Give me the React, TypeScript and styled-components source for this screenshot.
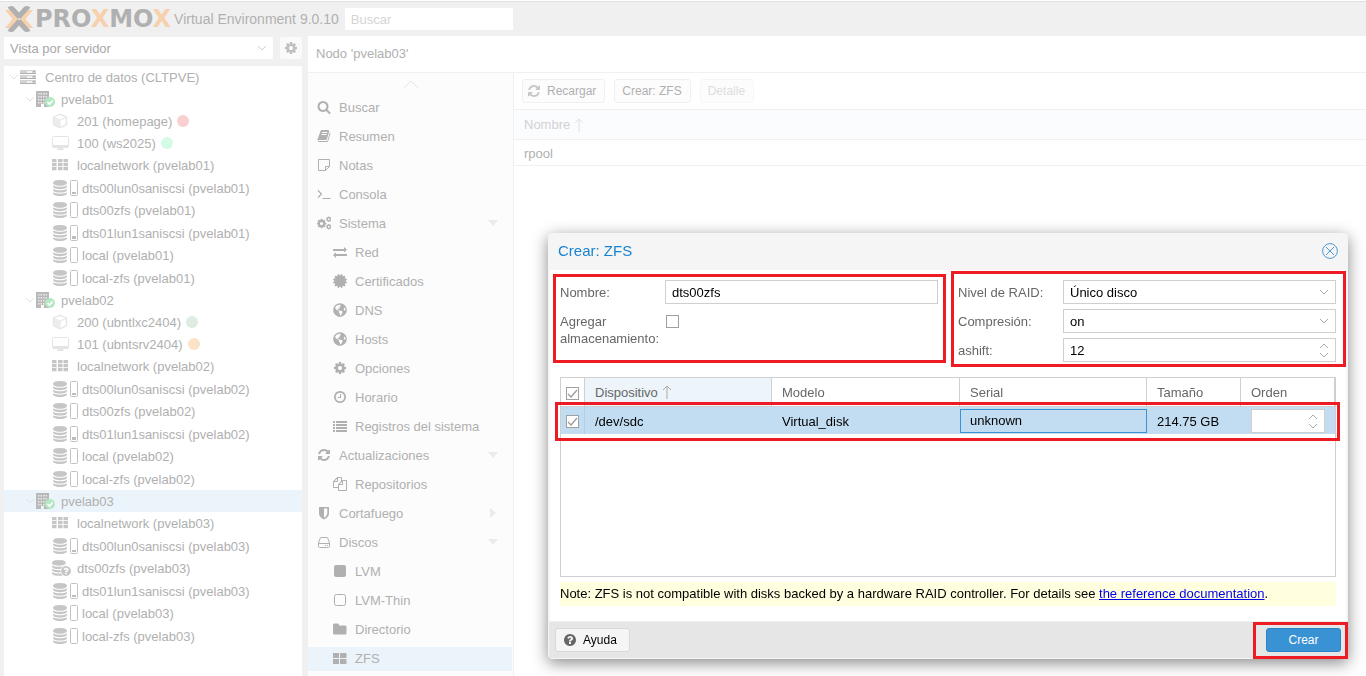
import React from "react";
import styled, { createGlobalStyle, css } from "styled-components";
import { FaCertificate, FaGlobeAmericas } from "react-icons/fa";

const GlobalStyle = createGlobalStyle`
  *, *::before, *::after { box-sizing: border-box; }
  html, body { margin: 0; padding: 0; }
  body, button, input, select {
    font-family: "Liberation Sans", Arial, Helvetica, sans-serif;
    font-size: 13px;
  }
  body { background: #fff; overflow: hidden; }
  ul { list-style: none; margin: 0; padding: 0; }
`;

/* ---------- icons ---------- */

const glyphs: Record<string, string> = {
  search:
    "M1216 832q0-185-131.5-316.5t-316.5-131.5-316.5 131.5-131.5 316.5 131.5 316.5 316.5 131.5 316.5-131.5 131.5-316.5zm512 832q0 52-38 90t-90 38q-54 0-90-38l-343-342q-179 124-399 124-143 0-273.5-55.5t-225-150-150-225-55.5-273.5 55.5-273.5 150-225 225-150 273.5-55.5 273.5 55.5 225 150 150 225 55.5 273.5q0 220-124 399l343 343q37 37 37 90z",
  refresh:
    "M1639 1056q0 5-1 7-64 268-268 434.5t-478 166.5q-146 0-282.5-55t-243.5-157l-129 129q-19 19-45 19t-45-19-19-45v-448q0-26 19-45t45-19h448q26 0 45 19t19 45-19 45l-137 137q71 66 161 102t187 36q134 0 250-65t186-179q11-17 53-117 8-23 30-23h192q13 0 22.5 9.5t9.5 22.5zm25-800v448q0 26-19 45t-45 19h-448q-26 0-45-19t-19-45 19-45l138-138q-148-137-349-137-134 0-250 65t-186 179q-11 17-53 117-8 23-30 23h-199q-13 0-22.5-9.5t-9.5-22.5v-7q65-268 270-434.5t480-166.5q146 0 284 55.5t245 156.5l130-129q19-19 45-19t45 19 19 45z",
  cog: "M1152 896q0-106-75-181t-181-75-181 75-75 181 75 181 181 75 181-75 75-181zm512-109v222q0 12-8 23t-20 13l-185 28q-19 54-39 91 35 50 107 138 10 12 10 25t-9 23q-27 37-99 108t-94 71q-12 0-26-9l-138-108q-44 23-91 38-16 136-29 186-7 28-36 28h-222q-14 0-24.5-8.5t-11.5-21.5l-28-184q-49-16-90-37l-141 107q-10 9-25 9-14 0-25-11-126-114-165-168-7-10-7-23 0-12 8-23 15-21 51-66.5t54-70.5q-27-50-41-99l-183-27q-13-2-21-12.5t-8-23.5v-222q0-12 8-23t19-13l186-28q14-46 39-92-40-57-107-138-10-12-10-24 0-10 9-23 26-36 98.5-107.5t94.5-71.5q13 0 26 10l138 107q44-23 91-38 16-136 29-186 7-28 36-28h222q14 0 24.5 8.5t11.5 21.5l28 184q49 16 90 37l142-107q9-9 24-9 13 0 25 10 129 119 165 170 7 8 7 22 0 12-8 23-15 21-51 66.5t-54 70.5q26 50 41 98l183 28q13 2 21 12.5t8 23.5z",
  clock:
    "M1024 544v448q0 14-9 23t-23 9h-320q-14 0-23-9t-9-23v-64q0-14 9-23t23-9h224v-352q0-14 9-23t23-9h64q14 0 23 9t9 23zm416 352q0-148-73-273t-198-198-273-73-273 73-198 198-73 273 73 273 198 198 273 73 273-73 198-198 73-273zm224 0q0 209-103 385.5t-279.5 279.5-385.5 103-385.5-103-279.5-279.5-103-385.5 103-385.5 279.5-279.5 385.5-103 385.5 103 279.5 279.5 103 385.5z",
  database:
    "M896 768q237 0 443-43t325-127v170q0 69-103 128t-280 93.5-385 34.5-385-34.5-280-93.5-103-128v-170q119 84 325 127t443 43zm0 768q237 0 443-43t325-127v170q0 69-103 128t-280 93.5-385 34.5-385-34.5-280-93.5-103-128v-170q119 84 325 127t443 43zm0-384q237 0 443-43t325-127v170q0 69-103 128t-280 93.5-385 34.5-385-34.5-280-93.5-103-128v-170q119 84 325 127t443 43zm0-1152q208 0 385 34.5t280 93.5 103 128v128q0 69-103 128t-280 93.5-385 34.5-385-34.5-280-93.5-103-128v-128q0-69 103-128t280-93.5 385-34.5z",
  question:
    "M1024 1376v-192q0-14-9-23t-23-9h-192q-14 0-23 9t-9 23v192q0 14 9 23t23 9h192q14 0 23-9t9-23zm256-672q0-88-55.5-163t-138.5-116-170-41q-243 0-371 213-15 24 8 42l132 100q7 6 19 6 16 0 25-12 53-68 86-92 34-24 86-24 48 0 85.5 26t37.5 59q0 38-20 61t-68 45q-63 28-115.5 86.5t-52.5 125.5v36q0 14 9 23t23 9h192q14 0 23-9t9-23q0-19 21.5-49.5t54.5-49.5q32-18 49-28.5t46-35 44.5-48 28-60.5 12.5-81zm384 192q0 209-103 385.5t-279.5 279.5-385.5 103-385.5-103-279.5-279.5-103-385.5 103-385.5 279.5-279.5 385.5-103 385.5 103 279.5 279.5 103 385.5z",
  book: "M1703 478q40 57 18 129l-275 906q-19 64-76.5 107.5t-122.5 43.5h-923q-77 0-148.5-53.5t-99.5-131.5q-24-67-2-127 0-4 3-27t4-37q1-8-3-21.5t-3-19.5q2-11 8-21t16.5-23.5 16.5-23.5q23-38 45-91.5t30-91.5q3-10 .5-30t-.5-28q3-11 17-28t17-23q21-36 42-92t25-90q1-9-2.5-32t.5-28q4-13 22-30.5t22-22.5q19-26 42.5-84.5t27.5-96.5q1-8-3-25.5t-2-26.5q2-8 9-18t18-23 17-21q8-12 16.5-30.5t15-35 16-36 19.5-32 26.5-23.5 36-11.5 47.5 5.5l-1 3q38-9 51-9h761q74 0 114 56t18 130l-274 906q-36 119-71.5 153.5t-128.5 34.5h-869q-27 0-38 15-11 16-1 43 24 70 144 70h923q29 0 56-15.5t35-41.5l300-987q7-22 5-57 38 15 59 43zm-1064 2q-4 13 2 22.5t20 9.5h608q13 0 25.5-9.5t16.5-22.5l21-64q4-13-2-22.5t-20-9.5h-608q-13 0-25.5 9.5t-16.5 22.5zm-83 256q-4 13 2 22.5t20 9.5h608q13 0 25.5-9.5t16.5-22.5l21-64q4-13-2-22.5t-20-9.5h-608q-13 0-25.5 9.5t-16.5 22.5z",
  files:
    "M1696 384q40 0 68 28t28 68v1216q0 40-28 68t-68 28h-960q-40 0-68-28t-28-68v-288h-544q-40 0-68-28t-28-68v-672q0-40 20-88t48-76l408-408q28-28 76-48t88-20h416q40 0 68 28t28 68v328q68-40 128-40h416zm-544 213l-299 299h299v-299zm-640-384l-299 299h299v-299zm196 647l316-316v-416h-384v416q0 40-28 68t-68 28h-416v640h512v-256q0-40 20-88t48-76zm956 804v-1152h-384v416q0 40-28 68t-68 28h-416v640h896z",
};

const Svg = styled.svg<{ $color?: string }>`
  display: block;
  flex: none;
  color: ${(p) => p.$color ?? "inherit"};
`;

const Glyph = ({ name, size = 14, color }: { name: string; size?: number; color?: string }) => (
  <Svg width={size} height={size} viewBox="0 0 1792 1792" fill="currentColor" $color={color} aria-hidden>
    <path d={glyphs[name]} />
  </Svg>
);

const Small = ({ children }: { children: React.ReactNode }) => (
  <Svg width="14" height="14" viewBox="0 0 14 14" fill="currentColor" aria-hidden>
    {children}
  </Svg>
);

const CogsIcon = () => (
  <Small>
    <g transform="translate(-1 2) scale(.0062)"><path d={glyphs.cog} /></g>
    <g transform="translate(8.500 0) scale(.0036)"><path d={glyphs.cog} /></g>
    <g transform="translate(8.500 7.500) scale(.0036)"><path d={glyphs.cog} /></g>
  </Small>
);
const NoteIcon = () => (
  <Small>
    <path
      d="M1.500 1.500h11v7l-4 4h-7zM12.500 8.500h-4v4"
      fill="none"
      stroke="currentColor"
      strokeLinejoin="round"
    />
  </Small>
);
const TerminalIcon = () => (
  <Small>
    <path d="M1 3.500l3.500 3.500L1 10.500" fill="none" stroke="currentColor" strokeWidth="1.200" />
    <path d="M5.500 11h8v1h-8z" />
  </Small>
);
const ExchangeIcon = () => (
  <Small>
    <path d="M0 4h11V2l3 2.700-3 2.700V6H0zM14 11H3v2L0 10l3-2.700V9h11z" />
  </Small>
);
const ListIcon = () => (
  <Small>
    <path d="M0 2h2v2H0zM3 2h11v2H3zM0 5h2v2H0zM3 5h11v2H3zM0 8h2v2H0zM3 8h11v2H3zM0 11h2v2H0zM3 11h11v2H3z" />
  </Small>
);
const ShieldIcon = () => (
  <Small>
    <path
      fillRule="evenodd"
      d="M2 1h10v6.500q0 3.500-5 6q-5-2.500-5-6zM7 2.500v9.200q3.300-2 3.300-4.500V2.500z"
    />
  </Small>
);
const DiskIcon = () => (
  <Small>
    <path
      d="M1.500 8L3.300 3q.2-.5.800-.5h5.800q.6 0 .8.500L12.500 8v3.500q0 1-1 1h-9q-1 0-1-1zM1.500 8.500h11"
      fill="none"
      stroke="currentColor"
    />
    <path d="M8 10h1v1H8zM10 10h1v1h-1z" />
  </Small>
);
const SquareIcon = () => (
  <Small>
    <rect x="1" y="1" width="12" height="12" rx="2" />
  </Small>
);
const SquareOutlineIcon = () => (
  <Small>
    <rect x="1.500" y="1.500" width="11" height="11" rx="2" fill="none" stroke="currentColor" />
  </Small>
);
const FolderIcon = () => (
  <Small>
    <path d="M0 3q0-1.500 1.500-1.500h3.200Q6 1.500 6 3v.5h6q1.500 0 1.500 1.500v6q0 1.500-1.500 1.500H1.500Q0 12.500 0 11z" />
  </Small>
);
const TilesIcon = () => (
  <Small>
    <path d="M0 2h6v5H0zM7 2h6.500v5H7zM0 8h6v5H0zM7 8h6.500v5H7z" />
  </Small>
);

const ServerIcon = () => (
  <Svg width="16" height="14" viewBox="0 0 16 14" aria-hidden>
    {[0, 5, 10].map((y) => (
      <React.Fragment key={y}>
        <rect x="0" y={y} width="16" height="4" fill="#d2d2d2" />
        <path d={`M7 ${y + 1}h5v2H7z`} fill="#f2f2f2" />
        <path d={`M0 ${y + 3}h16v1H0zM13 ${y + 1}h2v1h-2z`} fill="#b0b0b0" />
      </React.Fragment>
    ))}
  </Svg>
);
const NodeIcon = () => (
  <Svg width="19" height="17" viewBox="0 0 19 17" aria-hidden>
    <path d="M0 0h13v16H8v-3H5v3H0z" fill="#b8b8b8" />
    {[2, 5, 8, 11].map((y) => (
      <path
        key={y}
        d={`M2 ${y}h1.500v1.500H2zM4.500 ${y}h1.500v1.500H4.500zM7 ${y}h1.500v1.500H7zM9.500 ${y}h1.500v1.500H9.500z`}
        fill="#e9e9e9"
      />
    ))}
    <circle cx="14" cy="11" r="5" fill="#b4e8c2" />
    <path d="M11.500 11l2 2 3.200-3.500" stroke="#fff" strokeWidth="1.600" fill="none" />
  </Svg>
);
const CubeIcon = () => (
  <Svg width="16" height="16" viewBox="0 0 16 16" aria-hidden>
    <path
      d="M8 1.200l6.700 2.600v8L8 15l-6.700-3.200v-8z"
      fill="#ececec"
      stroke="#e4e4e4"
    />
    <path d="M2.500 4L8 2.200 13.500 4 8 6.300zM8.700 7.500l5-2v5.800l-5 2.400z" fill="#fff" />
  </Svg>
);
const ScreenIcon = () => (
  <Svg width="17" height="16" viewBox="0 0 17 16" aria-hidden>
    <rect x=".5" y="1.500" width="16" height="11" rx="1" fill="#fff" stroke="#e4e4e4" />
    <path d="M1 10h15v3H1zM6 13h5v1h1v1H5v-1h1z" fill="#e4e4e4" />
  </Svg>
);
const GridIcon = () => (
  <Svg width="16" height="14" viewBox="0 0 16 14" fill="#c6c6c6" aria-hidden>
    {[1, 5, 9].map((y) => (
      <path key={y} d={`M0 ${y}h4.500v3.300H0zM6 ${y}h4.500v3.300H6zM11.500 ${y}h4.500v3.300h-4.500z`} />
    ))}
  </Svg>
);
const UsageBar = ({ level }: { level: number }) => (
  <Svg width="8" height="16" viewBox="0 0 8 16" aria-hidden>
    <rect x=".5" y=".5" width="7" height="15" rx="1" fill="#fff" stroke="#c2c2c2" />
    {level > 0 && <rect x="2" y={14 - level} width="4" height={level} fill="#bdbdbd" />}
  </Svg>
);
const UnknownStorageIcon = () => (
  <Svg width="20" height="17" viewBox="0 0 20 17" aria-hidden>
    <g transform="translate(-1 0) scale(.0088)" fill="#c6c6c6">
      <path d={glyphs.database} />
    </g>
    <circle cx="14" cy="11" r="5.500" fill="#fff" />
    <g transform="translate(8.300 5.300) scale(.0064)" fill="#c6c6c6">
      <path d={glyphs.question} />
    </g>
  </Svg>
);

const Chevron = ({ color = "#e2e2e2", up = false }: { color?: string; up?: boolean }) => (
  <Svg width="10" height="6" viewBox="0 0 10 6" fill="none" stroke="currentColor" $color={color} aria-hidden>
    <path d={up ? "M1 5l4-4 4 4" : "M1 1l4 4 4-4"} />
  </Svg>
);
const SortArrow = ({ color }: { color: string }) => (
  <Svg width="10" height="14" viewBox="0 0 10 14" fill="none" stroke="currentColor" $color={color} aria-hidden>
    <path d="M5 14V1M1 5l4-4 4 4" />
  </Svg>
);

const LogoMark = () => (
  <Svg width="28" height="26" viewBox="0 0 28 26" aria-hidden>
    <path d="M0 4h5.500l8 9-8 9H0l7.500-9zM28 4h-5.500l-8 9 8 9H28l-7.500-9z" fill="#f7d0ad" />
    <path
      d="M2.500 1.500Q4 0 6.500 0 8 0 9 1l5 5.500L19 1q1-1 2.500-1 2.500 0 4 1.500L14 14.200zM2.500 24.500Q4 26 6.500 26 8 26 9 25l5-5.500 5 5.500q1 1 2.500 1 2.500 0 4-1.500L14 11.800z"
      fill="#b0b0b0"
    />
  </Svg>
);

/* ---------- shell ---------- */

const Shell = styled.div`
  display: flex;
  flex-direction: column;
  height: 100vh;
  background: #f0f0f0;
  color: #b0b0b0;
`;
const TopBar = styled.header`
  flex: none;
  display: flex;
  align-items: center;
  height: 36px;
  padding: 1px 5px 0;
  border-top: 1px solid #fff;
  box-shadow: inset 0 1px #e0e0e0;
`;
const Wordmark = styled.span`
  margin: 0 3px 0 2px;
  font: bold 24px/26px "DejaVu Sans", sans-serif;
  em { color: #f7d0ad; font-style: normal; }
`;
const Version = styled.span`
  font-size: 14px;
  white-space: nowrap;
`;
const SearchBox = styled.input`
  width: 168px;
  height: 22px;
  margin-left: 6px;
  padding: 0 6px;
  border: 0;
  background: #fff;
  &::placeholder { color: #d4d4d4; }
`;
const Columns = styled.div`
  flex: 1;
  min-height: 0;
  display: flex;
`;

/* ---------- resource tree ---------- */

const Side = styled.aside`
  flex: none;
  width: 308px;
  padding: 1px 6px 0 4px;
  display: flex;
  flex-direction: column;
`;
const ViewBar = styled.div`
  display: flex;
  gap: 7px;
  height: 22px;
  margin-bottom: 7px;
`;
const ViewSelect = styled.div`
  flex: 1;
  display: flex;
  align-items: center;
  padding: 0 6px;
  background: #fff;
  select {
    flex: 1;
    appearance: none;
    border: 0;
    padding: 0;
    background: transparent;
    color: #a8a8a8;
  }
`;
const GearButton = styled.button`
  width: 22px;
  padding: 0 4px;
  border: 0;
  border-radius: 2px;
  background: #fafafa;
  color: #c0c0c0;
`;
const Tree = styled.nav`
  flex: 1;
  background: #fff;
`;
const indents = { root: 5, node: 21, leaf: 48 };
const TreeRow = styled.a<{ $level: keyof typeof indents; $selected?: boolean }>`
  display: flex;
  align-items: center;
  height: 22px;
  padding-left: ${(p) => indents[p.$level]}px;
  background: ${(p) => (p.$selected ? "#ebf4fa" : "transparent")};
  color: inherit;
  text-decoration: none;
  white-space: nowrap;
`;
const TreeIcon = styled.span<{ $width: number }>`
  display: flex;
  align-items: center;
  gap: 2px;
  width: ${(p) => p.$width}px;
`;
const StorageList = styled.ul`
  li:nth-child(odd) ${TreeRow} { height: 23px; padding-top: 1px; }
`;
const Dot = styled.span<{ $color: string }>`
  width: 12px;
  height: 12px;
  margin-left: 5px;
  border-radius: 50%;
  background: ${(p) => p.$color};
`;

type Guest = { label: string; kind: "ct" | "vm"; dot: string };
type Storage = { label: string; level: number; unknown?: boolean };

const storages = (node: string, levels: number[], unknown = false): Storage[] =>
  ["dts00lun0saniscsi", "dts00zfs", "dts01lun1saniscsi", "local", "local-zfs"].map((n, i) => ({
    label: `${n} (${node})`,
    level: levels[i],
    unknown: unknown && i === 1,
  }));

const nodes: { name: string; guests: Guest[]; storages: Storage[] }[] = [
  {
    name: "pvelab01",
    guests: [
      { label: "201 (homepage)", kind: "ct", dot: "#f9cfcf" },
      { label: "100 (ws2025)", kind: "vm", dot: "#d3fbe6" },
    ],
    storages: storages("pvelab01", [2, 0, 3, 0, 0]),
  },
  {
    name: "pvelab02",
    guests: [
      { label: "200 (ubntlxc2404)", kind: "ct", dot: "#e0ece0" },
      { label: "101 (ubntsrv2404)", kind: "vm", dot: "#fce3c6" },
    ],
    storages: storages("pvelab02", [2, 0, 3, 0, 0]),
  },
  { name: "pvelab03", guests: [], storages: storages("pvelab03", [2, 0, 2, 0, 0], true) },
];

const ResourceTree = () => (
  <Tree aria-label="Recursos">
    <TreeRow href="#" $level="root">
      <TreeIcon $width={11}><Chevron /></TreeIcon>
      <TreeIcon $width={25}><ServerIcon /></TreeIcon>
      Centro de datos (CLTPVE)
    </TreeRow>
    {nodes.map((node) => (
      <React.Fragment key={node.name}>
        <TreeRow href="#" $level="node" $selected={node.name === "pvelab03"}>
          <TreeIcon $width={11}><Chevron /></TreeIcon>
          <TreeIcon $width={25}><NodeIcon /></TreeIcon>
          {node.name}
        </TreeRow>
        {node.guests.map((g) => (
          <TreeRow href="#" $level="leaf" key={g.label}>
            <TreeIcon $width={25}>{g.kind === "ct" ? <CubeIcon /> : <ScreenIcon />}</TreeIcon>
            {g.label}
            <Dot $color={g.dot} />
          </TreeRow>
        ))}
        <TreeRow href="#" $level="leaf">
          <TreeIcon $width={25}><GridIcon /></TreeIcon>
          localnetwork ({node.name})
        </TreeRow>
        <StorageList>
          {node.storages.map((s) => (
            <li key={s.label}>
              <TreeRow href="#" $level="leaf">
                {s.unknown ? (
                  <TreeIcon $width={25}><UnknownStorageIcon /></TreeIcon>
                ) : (
                  <TreeIcon $width={30}>
                    <Glyph name="database" size={16} color="#c6c6c6" />
                    <UsageBar level={s.level} />
                  </TreeIcon>
                )}
                {s.label}
              </TreeRow>
            </li>
          ))}
        </StorageList>
      </React.Fragment>
    ))}
  </Tree>
);

/* ---------- node panel ---------- */

const Panel = styled.main`
  flex: 1;
  min-width: 0;
  display: flex;
  flex-direction: column;
  background: #fff;
`;
const PanelTitle = styled.div`
  flex: none;
  height: 37px;
  padding: 0 8px;
  border-bottom: 1px solid #f0f0f0;
  line-height: 36px;
`;
const Nav = styled.nav`
  flex: none;
  width: 206px;
  overflow: hidden;
  border-right: 1px solid #f0f0f0;
  background: #fcfcfc;
`;
const ScrollUp = styled.button`
  display: flex;
  justify-content: center;
  width: 100%;
  height: 23px;
  padding: 7px 0 0;
  border: 0;
  background: transparent;
`;
const NavItem = styled.a<{ $child?: boolean; $selected?: boolean }>`
  display: flex;
  align-items: center;
  gap: 8px;
  height: 24px;
  margin: 0 1px 5px 0;
  padding: 0 14px 2px ${(p) => (p.$child ? 25 : 9)}px;
  background: ${(p) => (p.$selected ? "#ebf4fb" : "transparent")};
  color: inherit;
  text-decoration: none;
  > span { flex: 1; }
`;
const Expander = ({ right }: { right?: boolean }) => (
  <Svg width="10" height="10" viewBox="0 0 10 10" fill="#ebebeb" aria-hidden>
    <path d={right ? "M2 0l6 5-6 5z" : "M0 2h10L5 8z"} />
  </Svg>
);

type Entry = { label: string; icon: React.ReactNode; child?: boolean; mark?: "open" | "closed" };
const entries: Entry[] = [
  { label: "Buscar", icon: <Glyph name="search" /> },
  { label: "Resumen", icon: <Glyph name="book" /> },
  { label: "Notas", icon: <NoteIcon /> },
  { label: "Consola", icon: <TerminalIcon /> },
  { label: "Sistema", icon: <CogsIcon />, mark: "open" },
  { label: "Red", icon: <ExchangeIcon />, child: true },
  { label: "Certificados", icon: <FaCertificate size={14} />, child: true },
  { label: "DNS", icon: <FaGlobeAmericas size={14} />, child: true },
  { label: "Hosts", icon: <FaGlobeAmericas size={14} />, child: true },
  { label: "Opciones", icon: <Glyph name="cog" />, child: true },
  { label: "Horario", icon: <Glyph name="clock" />, child: true },
  { label: "Registros del sistema", icon: <ListIcon />, child: true },
  { label: "Actualizaciones", icon: <Glyph name="refresh" />, mark: "open" },
  { label: "Repositorios", icon: <Glyph name="files" />, child: true },
  { label: "Cortafuego", icon: <ShieldIcon />, mark: "closed" },
  { label: "Discos", icon: <DiskIcon />, mark: "open" },
  { label: "LVM", icon: <SquareIcon />, child: true },
  { label: "LVM-Thin", icon: <SquareOutlineIcon />, child: true },
  { label: "Directorio", icon: <FolderIcon />, child: true },
  { label: "ZFS", icon: <TilesIcon />, child: true },
];

const Content = styled.section`
  flex: 1;
  min-width: 0;
`;
const Toolbar = styled.div`
  display: flex;
  gap: 9px;
  height: 37px;
  padding: 6px 8px;
  border-bottom: 1px solid #f0f0f0;
`;
const ToolButton = styled.button`
  display: flex;
  align-items: center;
  gap: 6px;
  height: 24px;
  padding: 0 8px 0 7px;
  border: 1px solid #f0f0f0;
  border-radius: 3px;
  background: #fcfcfc;
  color: #b0b0b0;
  font-size: 12px;
  svg { margin-left: -3px; }
  &:disabled { color: #dcdcdc; border-color: #f6f6f6; }
`;
const PoolTable = styled.table`
  width: 100%;
  border-collapse: separate;
  border-spacing: 0;
  th, td {
    padding: 0 10px;
    border-bottom: 1px solid #f0f0f0;
    font-weight: normal;
    text-align: left;
  }
  th { height: 30px; background: #fafcfe; color: #d2d2d2; }
  td { height: 26px; padding-top: 1px; }
`;
const HeadLabel = styled.span`
  display: flex;
  align-items: center;
  gap: 4px;
`;

/* ---------- dialog ---------- */

const marker = css`
  content: "";
  position: absolute;
  border: 3px solid #ed1c24;
  pointer-events: none;
`;
const Dialog = styled.div`
  position: fixed;
  right: 18px;
  bottom: 17px;
  width: 800px;
  border: 1px solid #f5f5f5;
  border-radius: 4px;
  background: #f5f5f5;
  box-shadow: 0 4px 16px #888;
  color: #000;
`;
const DialogHead = styled.div`
  display: flex;
  align-items: center;
  justify-content: space-between;
  height: 36px;
  padding: 0 9px 3px;
  h2 { margin: 0; font-size: 15px; font-weight: normal; color: #1883d0; }
`;
const CloseButton = styled.button`
  padding: 0;
  border: 0;
  background: transparent;
  color: #4a9ad8;
`;
const DialogBody = styled.div`
  margin: 0 1px;
  padding: 10px 10px 15px;
  background: #fff;
`;
const Fields = styled.div`
  display: grid;
  grid-template-columns: 1fr 1fr;
  gap: 20px;
  margin-bottom: 15px;
`;
const FieldColumn = styled.div<{ $wide?: boolean }>`
  position: relative;
  display: flex;
  flex-direction: column;
  gap: 5px;
  &::after {
    ${marker}
    inset: ${(p) => (p.$wide ? "-9px -10px -5px -7px" : "-6px -8px -1px -7px")};
  }
`;
const Field = styled.div`
  display: flex;
  gap: 5px;
  min-height: 24px;
  label { width: 100px; padding-top: 4px; line-height: 17px; color: #666; }
`;
const InputBox = styled.div`
  flex: 1;
  min-width: 0;
  display: flex;
  align-items: center;
  height: 24px;
  padding: 0 6px;
  border: 1px solid #cfcfcf;
  background: #fff;
  input, select {
    flex: 1;
    min-width: 0;
    height: 22px;
    padding: 0;
    border: 0;
    outline: 0;
    appearance: none;
    background: transparent;
    color: #000;
  }
`;
const Steps = styled.span`
  display: flex;
  flex-direction: column;
  gap: 3px;
`;
const Tick = styled.input`
  appearance: none;
  display: block;
  width: 13px;
  height: 13px;
  margin: 0;
  border: 1px solid #a0a0a0;
  background: #fff
    ${(p) =>
      p.defaultChecked
        ? `url("data:image/svg+xml,%3Csvg xmlns='http://www.w3.org/2000/svg' viewBox='0 0 11 11'%3E%3Cpath d='M1 6l3 3 6-7' fill='none' stroke='%23999' stroke-width='1.200'/%3E%3C/svg%3E")`
        : ""};
`;
const LoneTick = styled(Tick)`
  margin: 6px 0 0 1px;
`;
const DiskPanel = styled.div`
  position: relative;
  height: 200px;
  border: 1px solid #cfcfcf;
  &::after {
    ${marker}
    top: 24px;
    left: -6px;
    right: -5px;
    height: 39px;
  }
`;
const DiskTable = styled.table`
  width: 100%;
  table-layout: fixed;
  border-collapse: separate;
  border-spacing: 0;
  th {
    height: 29px;
    padding: 0 10px;
    border: solid #cfcfcf;
    border-width: 0 1px 1px 0;
    color: #666;
    font-weight: normal;
    text-align: left;
  }
  th:first-child, td:first-child { padding: 2px 5px 0; }
  th:nth-child(2) { background: #edf5fb; }
  td { height: 27px; padding: 2px 10px 0; background: #c2ddf2; }
  td:first-child { border-right: 1px solid #b5cfe2; }
  td:nth-child(4) { padding: 2px 0 1px; }
  td:nth-child(6) { padding: 2px 10px 1px; }
`;
const FocusedCell = styled.div`
  height: 24px;
  padding: 0 9px;
  border: 1px solid #3892d4;
  line-height: 22px;
`;
const Note = styled.p`
  margin: 5px 0 0;
  background: #ffffdf;
  line-height: 24px;
  a { color: #00e; }
`;
const DialogFoot = styled.div`
  display: flex;
  justify-content: space-between;
  height: 37px;
  padding: 6px;
  border-top: 1px solid #f0f0f0;
  background: #e6e6e6;
`;
const HelpButton = styled.button`
  display: flex;
  align-items: center;
  gap: 6px;
  width: 75px;
  height: 24px;
  padding: 0 7px;
  border: 1px solid #d8d8d8;
  border-radius: 3px;
  background: #f5f5f5;
  color: #000;
  font-size: 12px;
  svg { color: #666; }
`;
const SubmitWrap = styled.span`
  position: relative;
  &::after { ${marker} inset: -6px -7px -7px -13px; }
`;
const SubmitButton = styled.button`
  display: block;
  width: 75px;
  height: 24px;
  padding: 0;
  border: 1px solid #2a83c7;
  border-radius: 3px;
  background: #3892d4;
  color: #fff;
  font-size: 12px;
`;

const StepArrows = () => (
  <Steps>
    <Chevron up color="#aaa" />
    <Chevron color="#aaa" />
  </Steps>
);

const CreateZfsDialog = () => (
  <Dialog role="dialog" aria-labelledby="dialog-title">
    <DialogHead>
      <h2 id="dialog-title">Crear: ZFS</h2>
      <CloseButton aria-label="Cerrar">
        <Svg width="16" height="16" viewBox="0 0 16 16" fill="none" stroke="currentColor" aria-hidden>
          <circle cx="8" cy="8" r="7.400" />
          <path d="M4 4l8 8M12 4l-8 8" />
        </Svg>
      </CloseButton>
    </DialogHead>
    <DialogBody>
      <Fields>
        <FieldColumn>
          <Field>
            <label htmlFor="name">Nombre:</label>
            <InputBox><input id="name" defaultValue="dts00zfs" /></InputBox>
          </Field>
          <Field>
            <label htmlFor="add">Agregar almacenamiento:</label>
            <LoneTick type="checkbox" id="add" />
          </Field>
        </FieldColumn>
        <FieldColumn $wide>
          <Field>
            <label htmlFor="raid">Nivel de RAID:</label>
            <InputBox>
              <select id="raid"><option>Único disco</option></select>
              <Chevron color="#aaa" />
            </InputBox>
          </Field>
          <Field>
            <label htmlFor="compression">Compresión:</label>
            <InputBox>
              <select id="compression"><option>on</option></select>
              <Chevron color="#aaa" />
            </InputBox>
          </Field>
          <Field>
            <label htmlFor="ashift">ashift:</label>
            <InputBox>
              <input id="ashift" defaultValue="12" inputMode="numeric" />
              <StepArrows />
            </InputBox>
          </Field>
        </FieldColumn>
      </Fields>
      <DiskPanel>
        <DiskTable>
          <colgroup>
            <col width="24" />
            <col width="187" />
            <col width="188" />
            <col width="187" />
            <col width="94" />
            <col />
          </colgroup>
          <thead>
            <tr>
              <th><Tick type="checkbox" defaultChecked aria-label="Seleccionar todo" /></th>
              <th><HeadLabel>Dispositivo <SortArrow color="#aaa" /></HeadLabel></th>
              <th>Modelo</th>
              <th>Serial</th>
              <th>Tamaño</th>
              <th>Orden</th>
            </tr>
          </thead>
          <tbody>
            <tr>
              <td><Tick type="checkbox" defaultChecked aria-label="Seleccionar /dev/sdc" /></td>
              <td>/dev/sdc</td>
              <td>Virtual_disk</td>
              <td><FocusedCell>unknown</FocusedCell></td>
              <td>214.75 GB</td>
              <td>
                <InputBox>
                  <input aria-label="Orden" inputMode="numeric" />
                  <StepArrows />
                </InputBox>
              </td>
            </tr>
          </tbody>
        </DiskTable>
      </DiskPanel>
      <Note>
        Note: ZFS is not compatible with disks backed by a hardware RAID controller. For details see{" "}
        <a href="#">the reference documentation</a>.
      </Note>
    </DialogBody>
    <DialogFoot>
      <HelpButton><Glyph name="question" /> Ayuda</HelpButton>
      <SubmitWrap><SubmitButton>Crear</SubmitButton></SubmitWrap>
    </DialogFoot>
  </Dialog>
);

export default function App() {
  return (
    <>
      <GlobalStyle />
      <Shell>
        <TopBar>
          <LogoMark />
          <Wordmark>PRO<em>X</em>MO<em>X</em></Wordmark>
          <Version>Virtual Environment 9.0.10</Version>
          <SearchBox placeholder="Buscar" aria-label="Buscar" />
        </TopBar>
        <Columns>
          <Side>
            <ViewBar>
              <ViewSelect>
                <select aria-label="Vista"><option>Vista por servidor</option></select>
                <Chevron color="#d0d0d0" />
              </ViewSelect>
              <GearButton aria-label="Ajustes"><Glyph name="cog" /></GearButton>
            </ViewBar>
            <ResourceTree />
          </Side>
          <Panel>
            <PanelTitle>Nodo 'pvelab03'</PanelTitle>
            <Columns>
              <Nav aria-label="Nodo">
                <ScrollUp aria-label="Subir">
                  <Svg width="16" height="9" viewBox="0 0 16 9" fill="none" stroke="#e6e6e6" aria-hidden>
                    <path d="M1 8l7-7 7 7" />
                  </Svg>
                </ScrollUp>
                {entries.map((e) => (
                  <NavItem href="#" key={e.label} $child={e.child} $selected={e.label === "ZFS"}>
                    {e.icon}
                    <span>{e.label}</span>
                    {e.mark && <Expander right={e.mark === "closed"} />}
                  </NavItem>
                ))}
              </Nav>
              <Content>
                <Toolbar>
                  <ToolButton><Glyph name="refresh" color="#c8c8c8" /> Recargar</ToolButton>
                  <ToolButton>Crear: ZFS</ToolButton>
                  <ToolButton disabled>Detalle</ToolButton>
                </Toolbar>
                <PoolTable>
                  <thead>
                    <tr><th><HeadLabel>Nombre <SortArrow color="#e0e0e0" /></HeadLabel></th></tr>
                  </thead>
                  <tbody>
                    <tr><td>rpool</td></tr>
                  </tbody>
                </PoolTable>
              </Content>
            </Columns>
          </Panel>
        </Columns>
      </Shell>
      <CreateZfsDialog />
    </>
  );
}
